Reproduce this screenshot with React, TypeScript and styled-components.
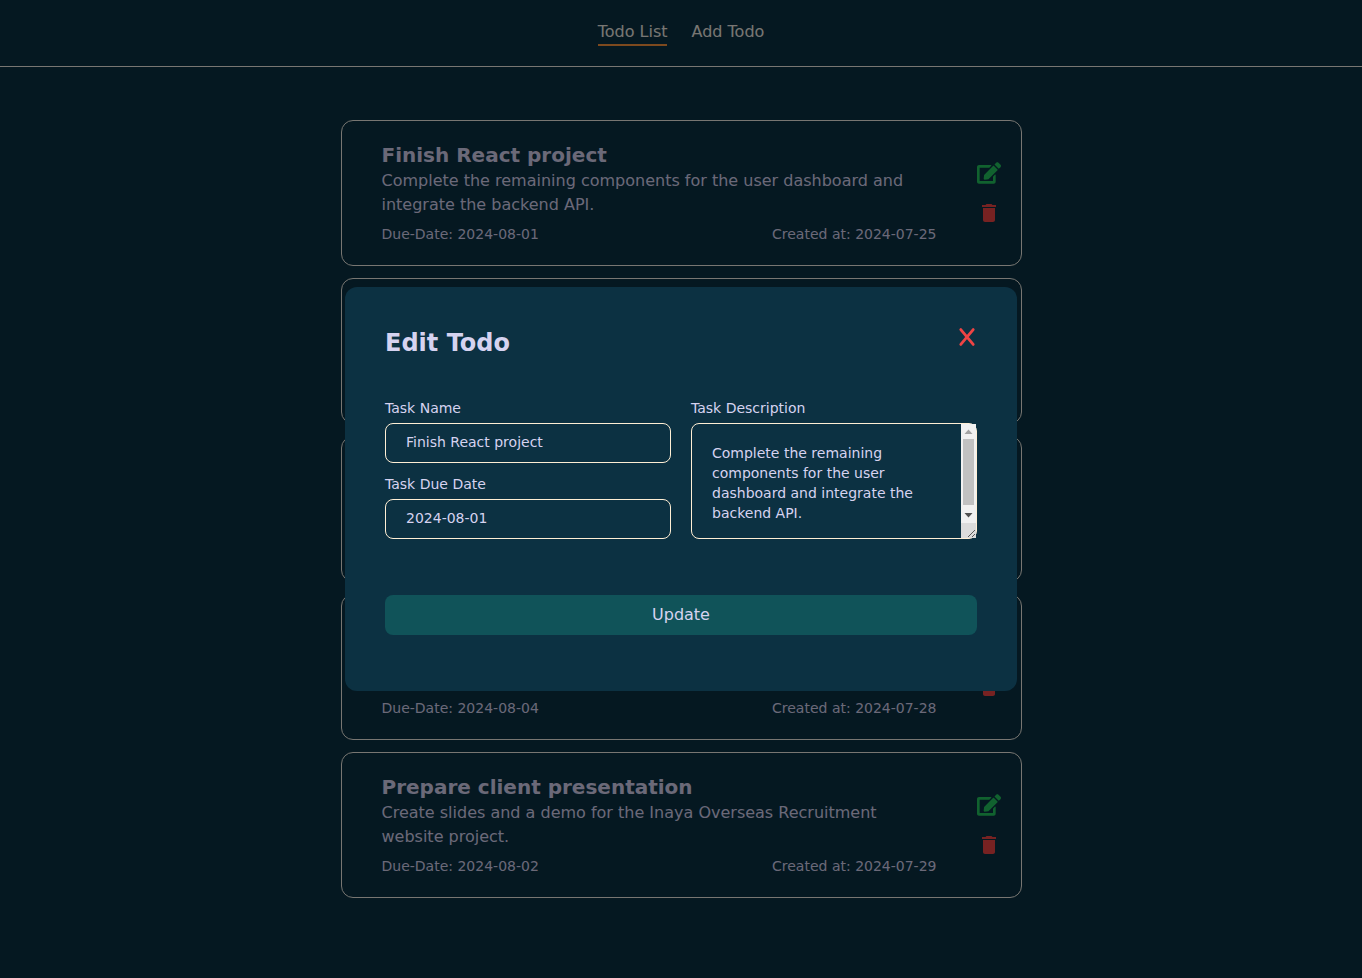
import React from "react";
import styled, { createGlobalStyle } from "styled-components";
import { FaEdit } from "react-icons/fa";
import { MdDelete } from "react-icons/md";

const GlobalStyle = createGlobalStyle`
  *, *::before, *::after { box-sizing: border-box; }
  body {
    margin: 0;
    background: #0a3042;
    color: #d6d3f0;
    font-family: "DejaVu Sans", sans-serif;
    font-size: 16px;
    line-height: 24px;
    overflow: hidden;
  }
  h2, h3, p { margin: 0; }
`;

const Page = styled.div`
  min-height: 978px;
`;

const Header = styled.header`
  display: flex;
  justify-content: center;
  align-items: flex-start;
  gap: 24px;
  padding: 20px 0;
  border-bottom: 1px solid #f0ede4;
`;

const NavLink = styled.a<{ $active?: boolean }>`
  color: #f0ede6;
  border-bottom: 2px solid ${(p) => (p.$active ? "#fb923c" : "transparent")};
`;

const TodoList = styled.main`
  display: flex;
  flex-direction: column;
  gap: 12px;
  width: 50%;
  margin: 53px auto 0;
`;

const Card = styled.article`
  display: flex;
  align-items: center;
  gap: 40px;
  height: 146px;
  padding: 20px 20px 20px 40px;
  border: 1px solid #f0ede4;
  border-radius: 12px;
`;

const CardBody = styled.div`
  flex: 1;
`;

const CardTitle = styled.h3`
  min-height: 28px;
  font-size: 20px;
  line-height: 28px;
`;

const Description = styled.p`
  min-height: 48px;
`;

const Dates = styled.div`
  display: flex;
  justify-content: space-between;
  min-height: 28px;
  padding: 7px 0 1px;
  font-size: 14px;
  line-height: 20px;
`;

const Actions = styled.div`
  display: flex;
  flex-direction: column;
  gap: 16px;
`;

const IconButton = styled.button<{ $color: string }>`
  display: flex;
  padding: 0;
  border: 0;
  background: none;
  font-size: 24px;
  color: ${(p) => p.$color};
`;

const Overlay = styled.div`
  position: fixed;
  inset: 0;
  display: flex;
  align-items: center;
  justify-content: center;
  background: rgba(0, 0, 0, 0.5);
`;

const Modal = styled.section`
  width: 672px;
  padding: 40px 40px 56px;
  border-radius: 12px;
  background: #0c3142;
`;

const ModalHeader = styled.div`
  display: flex;
  justify-content: space-between;
  align-items: flex-start;
  margin-bottom: 39px;
`;

const ModalTitle = styled.h2`
  font-size: 24px;
  line-height: 32px;
`;

const Fields = styled.div`
  display: grid;
  grid-template-columns: 1fr 1fr;
  gap: 20px;
  margin-bottom: 56px;
`;

const FieldColumn = styled.div`
  display: flex;
  flex-direction: column;
  gap: 11px;
`;

const Field = styled.label`
  display: flex;
  flex: 1;
  flex-direction: column;
  gap: 5px;
  font-size: 14px;
  line-height: 20px;
`;

const Input = styled.input`
  width: 100%;
  height: 40px;
  padding: 0 20px 2px;
  border: 1px solid #ffefd5;
  border-radius: 8px;
  outline: none;
  background: transparent;
  color: inherit;
  font: inherit;
`;

const TextAreaWrap = styled.div`
  position: relative;
`;

const TextArea = styled.textarea`
  display: block;
  width: 100%;
  height: 116px;
  padding: 19px 35px 15px 20px;
  border: 1px solid #ffefd5;
  border-radius: 8px;
  outline: none;
  resize: none;
  overflow: hidden;
  background: transparent;
  color: inherit;
  font: inherit;
`;

const ScrollBar = styled.div`
  position: absolute;
  top: 1px;
  right: 1px;
  bottom: 1px;
  width: 15px;
  display: flex;
  flex-direction: column;
  background: #f1f1f1;

  svg {
    display: block;
    flex: none;
  }
`;

const Track = styled.div`
  flex: 1;
  padding: 0 2px;
`;

const Thumb = styled.div`
  height: 66px;
  background: #c1c1c1;
`;

const Resizer = styled.div`
  height: 15px;
  background: #dcdcdc;
`;

const UpdateButton = styled.button`
  display: block;
  width: 100%;
  height: 40px;
  padding: 0;
  border: 0;
  border-radius: 8px;
  background: #105359;
  color: inherit;
  font: inherit;
`;

const CloseButton = styled.button`
  display: flex;
  padding: 0;
  border: 0;
  background: none;
  color: #ef4444;
`;

const todos = [
  {
    title: "Finish React project",
    text: "Complete the remaining components for the user dashboard and integrate the backend API.",
    due: "2024-08-01",
    created: "2024-07-25",
  },
  { title: "", text: "", due: "", created: "" },
  { title: "", text: "", due: "", created: "" },
  { title: "", text: "", due: "2024-08-04", created: "2024-07-28" },
  {
    title: "Prepare client presentation",
    text: "Create slides and a demo for the Inaya Overseas Recruitment website project.",
    due: "2024-08-02",
    created: "2024-07-29",
  },
];

export default function App() {
  return (
    <>
      <GlobalStyle />
      <Page>
        <Header>
          <NavLink $active>Todo List</NavLink>
          <NavLink>Add Todo</NavLink>
        </Header>
        <TodoList>
          {todos.map((todo, i) => (
            <Card key={i}>
              <CardBody>
                <CardTitle>{todo.title}</CardTitle>
                <Description>{todo.text}</Description>
                <Dates>
                  {todo.due && <span>Due-Date: {todo.due}</span>}
                  {todo.created && <span>Created at: {todo.created}</span>}
                </Dates>
              </CardBody>
              <Actions>
                <IconButton $color="#22c55e" aria-label="Edit">
                  <FaEdit />
                </IconButton>
                <IconButton $color="#ef4444" aria-label="Delete">
                  <MdDelete />
                </IconButton>
              </Actions>
            </Card>
          ))}
        </TodoList>
      </Page>
      <Overlay>
        <Modal>
          <ModalHeader>
            <ModalTitle>Edit Todo</ModalTitle>
            <CloseButton aria-label="Close">
              <svg
                width="20"
                height="20"
                viewBox="0 0 20 20"
                fill="none"
                stroke="currentColor"
                strokeWidth="2.8"
                strokeLinecap="round"
              >
                <path d="M3.8 2.6L16.2 17.4M16.2 2.6L3.8 17.4" />
              </svg>
            </CloseButton>
          </ModalHeader>
          <Fields>
            <FieldColumn>
              <Field>
                Task Name
                <Input defaultValue="Finish React project" />
              </Field>
              <Field>
                Task Due Date
                <Input defaultValue="2024-08-01" />
              </Field>
            </FieldColumn>
            <Field>
              Task Description
              <TextAreaWrap>
                <TextArea defaultValue="Complete the remaining components for the user dashboard and integrate the backend API." />
                <ScrollBar>
                  <svg width="15" height="15" viewBox="0 0 15 15">
                    <path d="M3.5 10L7.5 5.5L11.5 10Z" fill="#a3a3a3" />
                  </svg>
                  <Track>
                    <Thumb />
                  </Track>
                  <svg width="15" height="15" viewBox="0 0 15 15">
                    <path d="M3.5 5L7.5 9.5L11.5 5Z" fill="#505050" />
                  </svg>
                  <Resizer>
                    <svg width="15" height="15" viewBox="0 0 15 15">
                      <path d="M7 14L14 7M11 14L14 11" fill="none" stroke="#5a5a5a" />
                    </svg>
                  </Resizer>
                </ScrollBar>
              </TextAreaWrap>
            </Field>
          </Fields>
          <UpdateButton>Update</UpdateButton>
        </Modal>
      </Overlay>
    </>
  );
}
